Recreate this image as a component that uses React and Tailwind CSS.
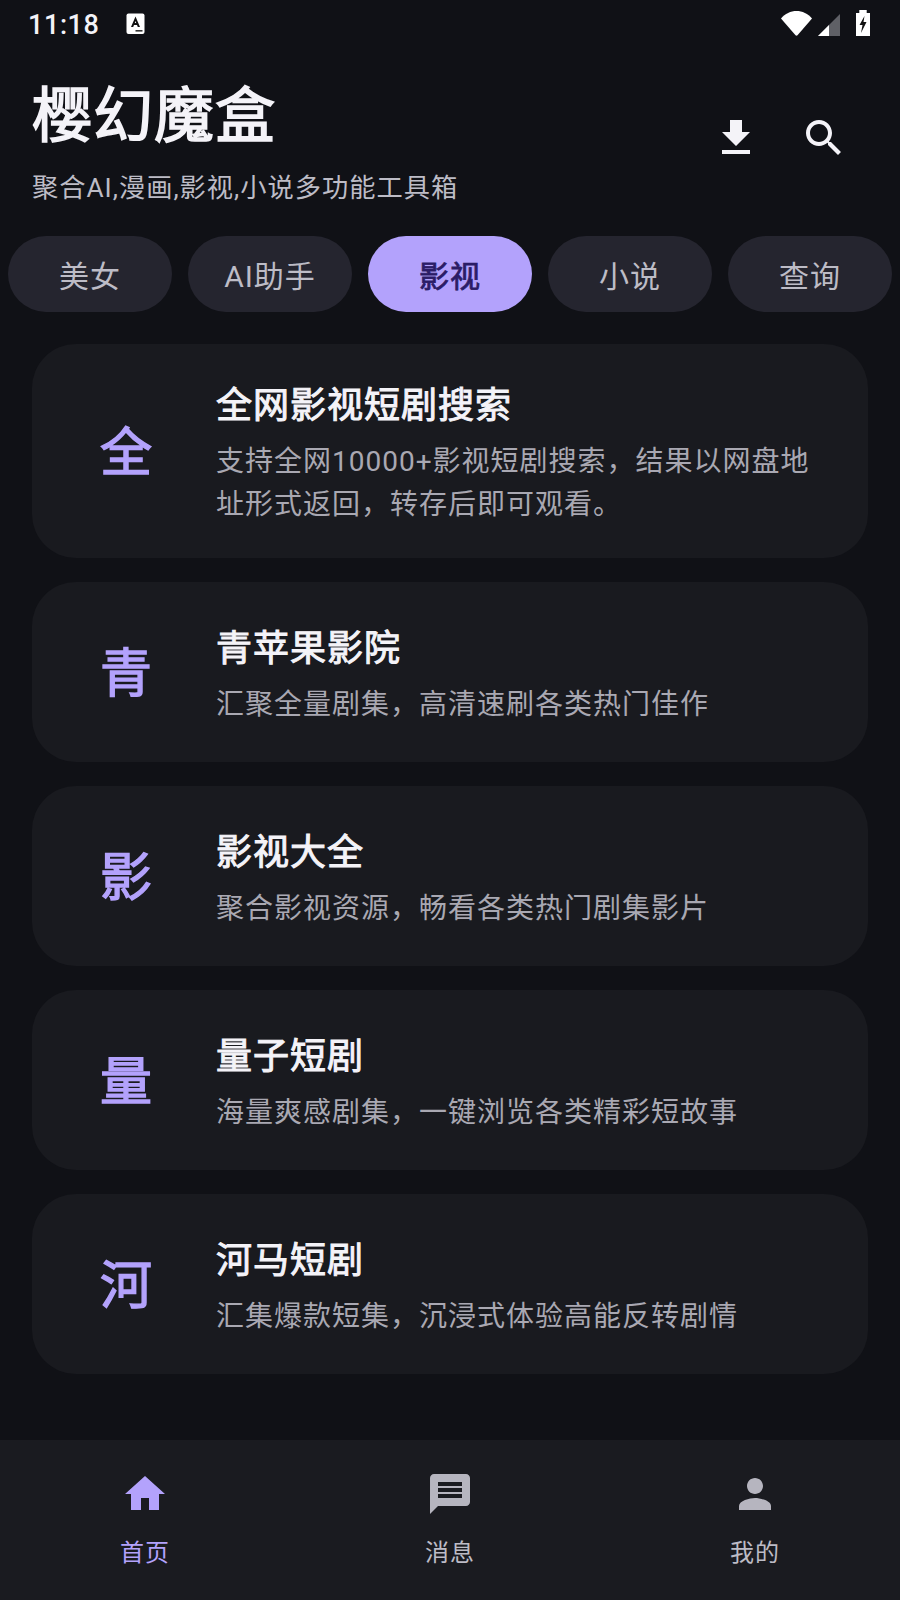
import React from "react";

const FONT = "font-['Roboto','Noto_Sans_CJK_SC',sans-serif]";

const TABS = ["美女", "AI助手", "影视", "小说", "查询"];

const CARDS = [
  { icon: "全", title: "全网影视短剧搜索", desc: "支持全网10000+影视短剧搜索，结果以网盘地址形式返回，转存后即可观看。" },
  { icon: "青", title: "青苹果影院", desc: "汇聚全量剧集，高清速刷各类热门佳作" },
  { icon: "影", title: "影视大全", desc: "聚合影视资源，畅看各类热门剧集影片" },
  { icon: "量", title: "量子短剧", desc: "海量爽感剧集，一键浏览各类精彩短故事" },
  { icon: "河", title: "河马短剧", desc: "汇集爆款短集，沉浸式体验高能反转剧情" },
];

function StatusBar() {
  return (
    <div className="flex h-[50px] items-start justify-between pl-[28px] pr-[30px] pt-[10px]">
      <div className="flex items-center gap-[26px]">
        <span className="text-[27px] leading-[30px] font-medium tracking-[0.6px] text-[#f4f3f8]">11:18</span>
        <svg width="19" height="22" viewBox="0 0 19 22" className="-mt-[3px]">
          <rect x="0.5" y="0.5" width="18" height="20.5" rx="2" fill="#fff" />
          <path d="M5 14 L9.5 3.5 L14 14 H11.8 L11 12 H8 L7.2 14 Z M8.8 10 H10.2 L9.5 8 Z" fill="#111" fillRule="evenodd" />
          <rect x="9.5" y="17" width="7" height="1.6" fill="#333" />
        </svg>
      </div>
      <div className="flex items-end">
        <svg width="31" height="25" viewBox="0 0 31 25">
          <path d="M0 7.5 C 8 -2.5, 23 -2.5, 31 7.5 L16.5 24.3 Q15.5 25.2 14.5 24.3 Z" fill="#fff" />
        </svg>
        <svg width="22" height="22" viewBox="0 0 22 22" className="ml-[6px]">
          <path d="M22 0 V22 H0 Z" fill="#5f6066" />
          <path d="M11 11 V22 H0 Z" fill="#fff" />
        </svg>
        <svg width="14" height="26" viewBox="0 0 14 26" className="ml-[16px]">
          <path d="M3.3 0 H10.7 V3 H14 V26 H0 V3 H3.3 Z" fill="#fff" />
          <path d="M8.5 6 L3.5 15 H6.5 L5 23 L10.5 12 H7.5 Z" fill="#111" />
        </svg>
      </div>
    </div>
  );
}

function Header() {
  return (
    <div className="flex items-start justify-between pl-[32px] pr-[52px] pt-[36px]">
      <div>
        <h1 className="text-[60px] leading-[62px] tracking-[1px] text-[#f4f3f8] [-webkit-text-stroke:1.6px_#f4f3f8]">樱幻魔盒</h1>
        <p className="mt-[22px] text-[26.25px] leading-[36px] tracking-[1px] text-[#bdbcc6]">聚合AI,漫画,影视,小说多功能工具箱</p>
      </div>
      <div className="mt-[28px] flex items-center gap-[40px]">
        <svg width="48" height="48" viewBox="0 0 24 24" fill="#f4f3f8">
          <path d="M19 9h-4V3H9v6H5l7 7 7-7zM5 18v2h14v-2H5z" />
        </svg>
        <svg width="48" height="48" viewBox="0 0 24 24" fill="#f4f3f8">
          <path d="M15.5 14h-.79l-.28-.27C15.41 12.59 16 11.11 16 9.5 16 5.91 13.09 3 9.5 3S3 5.91 3 9.5 5.91 16 9.5 16c1.61 0 3.09-.59 4.23-1.57l.27.28v.79l5 4.99L20.49 19l-4.99-5zm-6 0C7.01 14 5 11.99 5 9.5S7.01 5 9.5 5 14 7.01 14 9.5 11.99 14 9.5 14z" />
        </svg>
      </div>
    </div>
  );
}

function Tabs() {
  return (
    <div className="mt-[30px] flex gap-[16px] px-[8px]">
      {TABS.map((t) => (
        <div
          key={t}
          className={
            t === "影视"
              ? "flex h-[76px] w-[164px] items-center justify-center rounded-full bg-[#b3a2fc] pt-[5px] text-[30px] tracking-[1px] text-[#2b1c66] [-webkit-text-stroke:0.8px_#2b1c66]"
              : "flex h-[76px] w-[164px] items-center justify-center rounded-full bg-[#25252f] pt-[5px] text-[30px] tracking-[1px] text-[#bdbcc6]"
          }
        >
          {t}
        </div>
      ))}
    </div>
  );
}

function Card({ icon, title, desc }) {
  return (
    <div className="flex min-h-[180px] items-center rounded-[44px] bg-[#191a1f] pb-[32px] pl-[32px] pr-[50px] pt-[31px]">
      <div className="w-[124px] shrink-0 pt-[6px] text-center text-[52px] leading-none text-[#b3a2fc] [-webkit-text-stroke:1.4px_#b3a2fc]">{icon}</div>
      <div className="ml-[28px] pt-[5px]">
        <div className="text-[36px] leading-[52px] tracking-[1px] text-[#f4f3f8] [-webkit-text-stroke:1px_#f4f3f8]">{title}</div>
        <div className="mt-[8px] text-[28px] leading-[43px] tracking-[1px] text-[#a9a8b2]">{desc}</div>
      </div>
    </div>
  );
}

function NavItem({ label, active, children }) {
  return (
    <div className="flex w-[290px] flex-col items-center">
      {children}
      <span className={active ? "mt-[18px] text-[24px] leading-[34px] tracking-[1px] text-[#b3a2fc]" : "mt-[18px] text-[24px] leading-[34px] tracking-[1px] text-[#bdbcc6]"}>
        {label}
      </span>
    </div>
  );
}

function BottomNav() {
  return (
    <div className="mt-auto flex h-[160px] justify-between bg-[#1a1b20] pt-[30px]">
      <NavItem label="首页" active>
        <svg width="48" height="48" viewBox="0 0 24 24" fill="#b3a2fc">
          <path d="M10 20v-6h4v6h5v-8h3L12 3 2 12h3v8z" />
        </svg>
      </NavItem>
      <NavItem label="消息">
        <svg width="48" height="48" viewBox="0 0 24 24" fill="#b6b5bf">
          <path d="M20 2H4c-1.1 0-1.99.9-1.99 2L2 22l4-4h14c1.1 0 2-.9 2-2V4c0-1.1-.9-2-2-2zm-2 12H6v-2h12v2zm0-3H6V9h12v2zm0-3H6V6h12v2z" />
        </svg>
      </NavItem>
      <NavItem label="我的">
        <svg width="48" height="48" viewBox="0 0 24 24" fill="#b6b5bf">
          <path d="M12 12c2.21 0 4-1.79 4-4s-1.79-4-4-4-4 1.79-4 4 1.79 4 4 4zm0 2c-2.67 0-8 1.34-8 4v2h16v-2c0-2.66-5.33-4-8-4z" />
        </svg>
      </NavItem>
    </div>
  );
}

export default function App() {
  return (
    <div className={`flex h-[1600px] w-[900px] flex-col overflow-hidden bg-[#101116] ${FONT}`}>
      <StatusBar />
      <Header />
      <Tabs />
      <div className="mt-[32px] flex flex-col gap-[24px] px-[32px]">
        {CARDS.map((c) => (
          <Card key={c.icon} {...c} />
        ))}
      </div>
      <BottomNav />
    </div>
  );
}
